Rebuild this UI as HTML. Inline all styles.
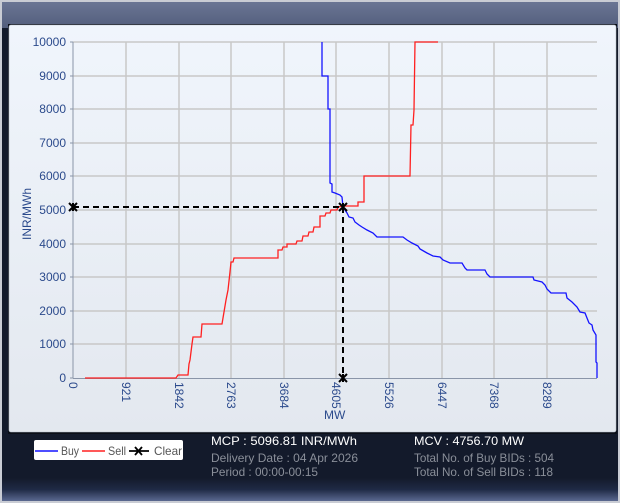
<!DOCTYPE html>
<html><head><meta charset="utf-8"><style>
html,body{margin:0;padding:0;width:620px;height:503px;overflow:hidden;background:#131a2b;}
svg{display:block;font-family:"Liberation Sans",sans-serif;}
</style></head><body>
<svg width="620" height="503" viewBox="0 0 620 503" xmlns="http://www.w3.org/2000/svg">
<defs>
<linearGradient id="hd" x1="0" y1="0" x2="0" y2="1"><stop offset="0" stop-color="#6a7594"/><stop offset="1" stop-color="#535e7c"/></linearGradient>
<linearGradient id="pn" x1="0" y1="0" x2="0" y2="1"><stop offset="0" stop-color="#f0f5fc"/><stop offset="1" stop-color="#e3e8ef"/></linearGradient>
<linearGradient id="bt" x1="0" y1="0" x2="0" y2="1"><stop offset="0" stop-color="#131a2b"/><stop offset="0.5" stop-color="#1f2a45"/><stop offset="1" stop-color="#5a6890"/></linearGradient>
</defs>
<rect x="0" y="0" width="620" height="503" fill="#c9ccd4"/>
<rect x="2" y="2" width="616" height="499" fill="#131a2b"/>
<rect x="2" y="478" width="616" height="23" fill="url(#bt)"/>
<rect x="2" y="2" width="616" height="26" fill="url(#hd)"/>
<rect x="8" y="24" width="609" height="410" fill="#0b0f18"/>
<rect x="9" y="25" width="607" height="407" rx="2" fill="url(#pn)" stroke="#b8c0cc" stroke-width="0.6"/>
<g stroke="#c8c8c8" stroke-width="1.5">
<line x1="73" y1="42" x2="597" y2="42"/><line x1="73" y1="76" x2="597" y2="76"/><line x1="73" y1="109" x2="597" y2="109"/><line x1="73" y1="143" x2="597" y2="143"/><line x1="73" y1="176" x2="597" y2="176"/><line x1="73" y1="210" x2="597" y2="210"/><line x1="73" y1="244" x2="597" y2="244"/><line x1="73" y1="277" x2="597" y2="277"/><line x1="73" y1="311" x2="597" y2="311"/><line x1="73" y1="344" x2="597" y2="344"/>
<line x1="126" y1="42" x2="126" y2="378"/><line x1="179" y1="42" x2="179" y2="378"/><line x1="231" y1="42" x2="231" y2="378"/><line x1="284" y1="42" x2="284" y2="378"/><line x1="336" y1="42" x2="336" y2="378"/><line x1="389" y1="42" x2="389" y2="378"/><line x1="442" y1="42" x2="442" y2="378"/><line x1="494" y1="42" x2="494" y2="378"/><line x1="547" y1="42" x2="547" y2="378"/>
</g>
<g stroke="#8a95a8" stroke-width="1">
<line x1="73" y1="42" x2="73" y2="378"/><line x1="73" y1="378.5" x2="597" y2="378.5"/>
<line x1="70" y1="42" x2="73" y2="42"/><line x1="70" y1="76" x2="73" y2="76"/><line x1="70" y1="109" x2="73" y2="109"/><line x1="70" y1="143" x2="73" y2="143"/><line x1="70" y1="176" x2="73" y2="176"/><line x1="70" y1="210" x2="73" y2="210"/><line x1="70" y1="244" x2="73" y2="244"/><line x1="70" y1="277" x2="73" y2="277"/><line x1="70" y1="311" x2="73" y2="311"/><line x1="70" y1="344" x2="73" y2="344"/><line x1="70" y1="378" x2="73" y2="378"/>
</g>
<g fill="#2b4a8c" font-size="12" text-anchor="end">
<text x="66" y="46">10000</text><text x="66" y="80">9000</text><text x="66" y="113">8000</text><text x="66" y="147">7000</text><text x="66" y="180">6000</text><text x="66" y="214">5000</text><text x="66" y="248">4000</text><text x="66" y="281">3000</text><text x="66" y="315">2000</text><text x="66" y="348">1000</text><text x="66" y="382">0</text>
</g>
<g fill="#2b4a8c" font-size="12">
<text transform="translate(69,382) rotate(90)">0</text>
<text transform="translate(122,382) rotate(90)">921</text>
<text transform="translate(175,382) rotate(90)">1842</text>
<text transform="translate(227,382) rotate(90)">2763</text>
<text transform="translate(280,382) rotate(90)">3684</text>
<text transform="translate(332,382) rotate(90)">4605</text>
<text transform="translate(385,382) rotate(90)">5526</text>
<text transform="translate(438,382) rotate(90)">6447</text>
<text transform="translate(490,382) rotate(90)">7368</text>
<text transform="translate(543,382) rotate(90)">8289</text>
<text x="324" y="419" font-size="12">MW</text>
<text transform="translate(31,240) rotate(-90)" font-size="12">INR/MWh</text>
</g>
<polyline fill="none" stroke="#ff2020" stroke-width="1.3" points="85,378 176,378 178,375 188,375 189,364 190,360 192,344 193,337 201,337 202,324 222,324 223,318 226,300 228,290 230,272 231,262 233,262 234,258 238,258 278,258 278,250 282,250 283,247 287,247 287,244 296,244 297,241 302,241 303,236 308,236 309,232 313,232 314,227 320,227 320,216 325,216 326,213 330,213 331,210 337,210 338,207 343,206 358,206 358,202 364,202 364,176 410,176 411,125 413,125 414,110 415,42 438,42"/>
<polyline fill="none" stroke="#1414ff" stroke-width="1.3" points="322,42 322,76 328,76 328,109 330,109 330,183 332,184 332,192 335,193 340,195 342,197 343,207 347,213 349,217 353,218 355,222 359,225 362,227 367,230 373,233 377,237 403,237 407,240 412,243 418,246 420,249 427,253 433,256 440,257 443,260 450,263 462,263 465,268 467,270 485,270 487,274 490,277 533,277 534,280 542,282 545,285 547,289 551,293 566,293 567,298 572,302 577,307 580,312 585,313 587,318 589,323 592,325 593,330 596,335 596,362 597,363 597,378"/>
<g stroke="#000" stroke-width="2" fill="none">
<polyline stroke-dasharray="6,4" points="73,207 343,207 343,378"/>
<path d="M69,203 L77,211 M77,203 L69,211 M73,203 L73,211 M339,203 L347,211 M347,203 L339,211 M343,203 L343,211 M339,374 L347,382 M347,374 L339,382 M343,374 L343,382"/>
</g>
<rect x="34" y="440" width="149" height="20" rx="2" fill="#fff"/>
<line x1="35" y1="451" x2="58" y2="451" stroke="#1414ff" stroke-width="1.5"/>
<line x1="82" y1="451" x2="105" y2="451" stroke="#ff2020" stroke-width="1.5"/>
<path d="M129,451 L149,451 M135,447 L142,455 M142,447 L135,455" stroke="#000" stroke-width="1.8"/>
<g font-size="12" fill="#555">
<text x="61" y="455" textLength="18" lengthAdjust="spacingAndGlyphs">Buy</text><text x="108" y="455" textLength="18" lengthAdjust="spacingAndGlyphs">Sell</text><text x="154" y="455" textLength="28" lengthAdjust="spacingAndGlyphs">Clear</text>
</g>
<g font-size="12">
<text x="211" y="445" fill="#fff" textLength="146" lengthAdjust="spacingAndGlyphs">MCP : 5096.81 INR/MWh</text>
<text x="211" y="462" fill="#8a8f99" textLength="147" lengthAdjust="spacingAndGlyphs">Delivery Date : 04 Apr 2026</text>
<text x="211" y="476" fill="#8a8f99" textLength="107" lengthAdjust="spacingAndGlyphs">Period :  00:00-00:15</text>
<text x="414" y="445" fill="#fff" textLength="110" lengthAdjust="spacingAndGlyphs">MCV : 4756.70 MW</text>
<text x="414" y="462" fill="#8a8f99" textLength="140" lengthAdjust="spacingAndGlyphs">Total No. of Buy BIDs : 504</text>
<text x="414" y="476" fill="#8a8f99" textLength="139" lengthAdjust="spacingAndGlyphs">Total No. of Sell BIDs : 118</text>
</g>
</svg>
</body></html>
